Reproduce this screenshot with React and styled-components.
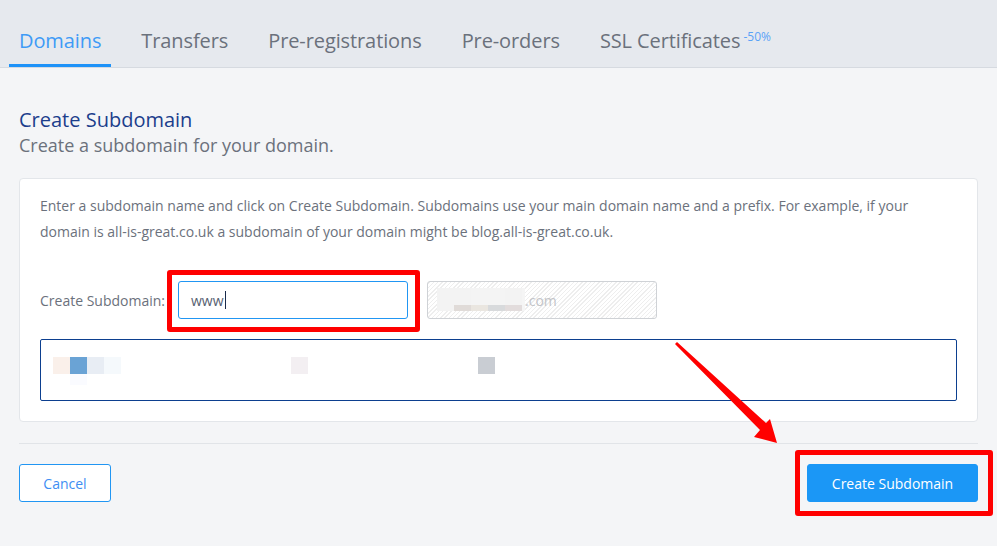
import React from "react";
import styled, { createGlobalStyle } from "styled-components";

const Global = createGlobalStyle`
  html, body { margin: 0; padding: 0; background: #f4f5f7; }
  body { font-family: "Open Sans", "Noto Sans", sans-serif; width: 997px; height: 546px; overflow: hidden; }
  * { box-sizing: border-box; }
`;

const Page = styled.div`
  position: relative;
  width: 997px;
  height: 546px;
  background: #f4f5f7;
`;

const TabBar = styled.nav`
  display: flex;
  gap: 20px;
  height: 68px;
  padding: 0 9px;
  background: #e6e9ee;
  border-bottom: 1px solid #d6dae0;
`;

const Tab = styled.div`
  height: 67px;
  padding: 29px 10px 0;
  font-size: 20px;
  line-height: 24px;
  letter-spacing: -0.1px;
  color: ${(p) => (p.$active ? "#3f9bf6" : "#6b717c")};
  border-bottom: 3px solid ${(p) => (p.$active ? "#1e92f8" : "transparent")};
  white-space: nowrap;
`;

const Badge = styled.span`
  display: inline-block;
  font-size: 12px;
  line-height: 12px;
  letter-spacing: 0;
  color: #5aa2f7;
  margin-left: 3px;
  vertical-align: top;
  position: relative;
  top: 2px;
`;

const Content = styled.main`
  padding: 40px 19px 0;
`;

const Title = styled.h1`
  margin: 0;
  font-size: 20px;
  line-height: 24px;
  font-weight: 400;
  color: #1c3e8c;
`;

const Subtitle = styled.p`
  margin: 2px 0 0;
  font-size: 18px;
  line-height: 23px;
  color: #6b717c;
`;

const Card = styled.section`
  margin-top: 21px;
  background: #fff;
  border: 1px solid #e3e6ea;
  border-radius: 4px;
  padding: 14px 20px 20px;
`;

const Description = styled.p`
  margin: 0;
  font-size: 14px;
  line-height: 26px;
  color: #6b717c;
`;

const FormRow = styled.div`
  display: flex;
  align-items: center;
  margin-top: 36px;
`;

const Label = styled.label`
  font-size: 14px;
  color: #6b717c;
  width: 138px;
`;

const Highlight = styled.div`
  position: relative;
  &::after {
    content: "";
    position: absolute;
    top: ${(p) => p.$t}px;
    left: ${(p) => p.$l}px;
    right: ${(p) => p.$r}px;
    bottom: ${(p) => p.$b}px;
    border: 5px solid #ff0000;
    border-radius: 3px;
    pointer-events: none;
  }
`;

const TextInput = styled.div`
  display: flex;
  align-items: center;
  width: 230px;
  height: 38px;
  padding: 0 12px;
  border: 1px solid #2196f3;
  border-radius: 3px;
  background: #fff;
  font-size: 14px;
  color: #566070;
`;

const Caret = styled.span`
  display: inline-block;
  width: 1px;
  height: 18px;
  background: #1a2a4a;
  margin-left: 1px;
`;

const Suffix = styled.div`
  display: flex;
  align-items: center;
  width: 230px;
  height: 38px;
  margin-left: 19px;
  padding: 0 9px;
  border: 1px solid #cfd2d6;
  border-radius: 3px;
  background: repeating-linear-gradient(-45deg, #ffffff 0 2px, #eeeeee 2px 3px);
  font-size: 14px;
  color: #c2c4c8;
`;

const Blur = styled.div`
  display: grid;
  grid-template-columns: repeat(5, 17px) 3px;
  grid-template-rows: 17px 6px;
  margin-top: -2px;
`;

const Px = styled.span`
  background: ${(p) => p.$c};
`;

const Result = styled.div`
  margin-top: 20px;
  height: 62px;
  border: 1px solid #0c3f8f;
  border-radius: 2px;
  padding: 17px 12px 0;
  display: flex;
  gap: 170px;
  align-items: flex-start;
`;

const PixelGroup = styled.div`
  display: grid;
  grid-template-columns: repeat(${(p) => p.$cols}, 17px);
  grid-auto-rows: 17px 11px;
`;

const Divider = styled.hr`
  margin: 21px 0 0;
  border: 0;
  border-top: 1px solid #e1e4e8;
`;

const Footer = styled.div`
  display: flex;
  justify-content: space-between;
  margin-top: 20px;
`;

const Button = styled.button`
  height: 38px;
  padding: 0;
  font-family: inherit;
  font-size: 14px;
  white-space: nowrap;
  border-radius: 3px;
  border: 1px solid ${(p) => (p.$primary ? "#1b97f6" : "#2196f3")};
  background: ${(p) => (p.$primary ? "#1b97f6" : "#fff")};
  color: ${(p) => (p.$primary ? "#fff" : "#3e8ef3")};
  width: ${(p) => p.$w}px;
`;

const Arrow = styled.svg`
  position: absolute;
  left: 670px;
  top: 338px;
  pointer-events: none;
`;

export default function App() {
  return (
    <Page>
      <Global />
      <TabBar>
        <Tab $active>Domains</Tab>
        <Tab>Transfers</Tab>
        <Tab>Pre-registrations</Tab>
        <Tab>Pre-orders</Tab>
        <Tab>
          SSL Certificates<Badge>-50%</Badge>
        </Tab>
      </TabBar>
      <Content>
        <Title>Create Subdomain</Title>
        <Subtitle>Create a subdomain for your domain.</Subtitle>
        <Card>
          <Description>
            Enter a subdomain name and click on Create Subdomain. Subdomains use your main domain name and a prefix. For example, if your domain is all-is-great.co.uk a subdomain of your domain might be blog.all-is-great.co.uk.
          </Description>
          <FormRow>
            <Label>Create Subdomain:</Label>
            <Highlight $t={-11} $l={-11} $r={-12} $b={-13}>
              <TextInput>
                www<Caret />
              </TextInput>
            </Highlight>
            <Suffix>
              <Blur>
                <Px $c="#f3f3f3" /><Px $c="#f3f3f3" /><Px $c="#f4f4f4" /><Px $c="#f4f4f4" /><Px $c="#f3f3f3" /><Px $c="#f5f5f5" />
                <Px $c="#f3f3f3" /><Px $c="#e0dbd8" /><Px $c="#eae6e0" /><Px $c="#d8dadc" /><Px $c="#e2dcdc" /><Px $c="#f5f5f5" />
              </Blur>
              .com
            </Suffix>
          </FormRow>
          <Result>
            <PixelGroup $cols={4}>
              <Px $c="#faf0ea" /><Px $c="#6aa3d5" /><Px $c="#e8edf4" /><Px $c="#f5f9fc" />
              <span /><Px $c="#fafbff" />
            </PixelGroup>
            <PixelGroup $cols={1}>
              <Px $c="#f3eff2" />
            </PixelGroup>
            <PixelGroup $cols={1}>
              <Px $c="#c9cdd3" />
            </PixelGroup>
          </Result>
        </Card>
        <Divider />
        <Footer>
          <Button $w={92}>Cancel</Button>
          <Highlight $t={-14} $l={-12} $r={-15} $b={-14}>
            <Button $primary $w={171}>Create Subdomain</Button>
          </Highlight>
        </Footer>
      </Content>
      <Arrow width="115" height="110" viewBox="0 0 115 110">
        <polygon points="5,6 7,4 96,85 100,81 107,105 84,99 90,92" fill="#ff0000" />
      </Arrow>
    </Page>
  );
}
